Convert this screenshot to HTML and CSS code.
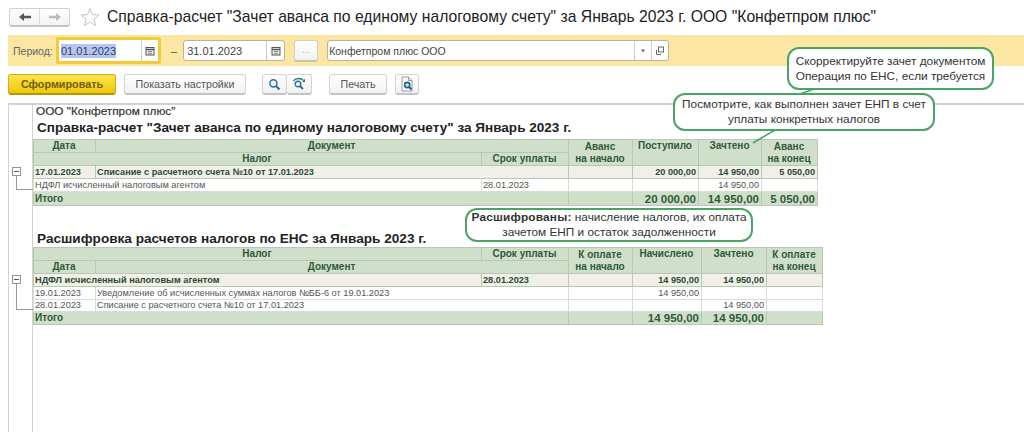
FILE: index.html
```html
<!DOCTYPE html>
<html lang="en">
<head>
    <meta charset="UTF-8">
    <meta name="viewport" content="width=device-width, initial-scale=1.0">
    <title>Справка-расчет</title>
    <link rel="stylesheet" href="styles.css">
</head>
<body>
    <div class="page">
        <div class="title-bar">
            <div class="nav-group">
                <span class="nav-btn">
                    <svg width="14" height="10" viewBox="0 0 14 10"><path d="M1 5 L6 1 V3.8 H13 V6.2 H6 V9 Z" fill="#555"/></svg>
                </span>
                <span class="nav-btn">
                    <svg width="14" height="10" viewBox="0 0 14 10"><path d="M13 5 L8 1 V3.8 H1 V6.2 H8 V9 Z" fill="#bbb"/></svg>
                </span>
            </div>
            <svg class="star" width="20" height="20" viewBox="0 0 20 20"><path d="M10 1.5 L12.4 7.6 L19 8 L13.9 12.2 L15.6 18.6 L10 15 L4.4 18.6 L6.1 12.2 L1 8 L7.6 7.6 Z" fill="#fff" stroke="#c4c4c4"/></svg>
            <h1 class="page-title">Справка-расчет "Зачет аванса по единому налоговому счету" за Январь 2023 г. ООО "Конфетпром плюс"</h1>
        </div>

        <div class="filter-bar">
            <span class="filter-label">Период:</span>
            <div class="field field-focus">
                <span class="field-text"><span class="selected">01.01.2023</span></span>
                <span class="field-btn">
                    <svg width="10" height="10" viewBox="0 0 10 10"><rect x="1" y="1.5" width="8" height="7.5" fill="#eee" stroke="#555"/><path d="M1 3.5 H9" stroke="#555" stroke-width="1.4"/><path d="M3 5.5 H7 M3 7.3 H7" stroke="#888"/></svg>
                </span>
            </div>
            <span class="dash">–</span>
            <div class="field field-date">
                <span class="field-text">31.01.2023</span>
                <span class="field-btn">
                    <svg width="10" height="10" viewBox="0 0 10 10"><rect x="1" y="1.5" width="8" height="7.5" fill="#eee" stroke="#555"/><path d="M1 3.5 H9" stroke="#555" stroke-width="1.4"/><path d="M3 5.5 H7 M3 7.3 H7" stroke="#888"/></svg>
                </span>
            </div>
            <span class="dots-btn">...</span>
            <div class="field field-org">
                <span class="field-text">Конфетпром плюс ООО</span>
                <span class="field-btn narrow">
                    <svg width="6" height="4" viewBox="0 0 6 4"><path d="M1 0.5 H5 L3 3.5 Z" fill="#666"/></svg>
                </span>
                <span class="field-btn narrow">
                    <svg width="10" height="10" viewBox="0 0 10 10"><rect x="3.5" y="1" width="5" height="5" fill="#fff" stroke="#666"/><path d="M1.5 4 V8.5 H6" fill="none" stroke="#666"/></svg>
                </span>
            </div>
        </div>

        <div class="tool-bar">
            <span class="btn btn-primary">Сформировать</span>
            <span class="btn btn-settings">Показать настройки</span>
            <div class="btn-group">
                <span class="btn btn-icon">
                    <svg width="13" height="13" viewBox="0 0 14 14"><circle cx="5.8" cy="5.8" r="3.8" fill="#f4f8fb" stroke="#2d6f9c" stroke-width="1.6"/><path d="M8.6 8.6 L12.4 12.4" stroke="#2d6f9c" stroke-width="2.2"/></svg>
                </span>
                <span class="btn btn-icon">
                    <svg width="14" height="14" viewBox="0 0 14 14"><path d="M1.5 4 C3 0.8 9 0.8 11.5 3.4" fill="none" stroke="#2a7a6a" stroke-width="1.3"/><path d="M13 1.8 V5 H10 Z" fill="#2a7a6a"/><circle cx="6" cy="7" r="2.8" fill="#f4f8fb" stroke="#2d6f9c" stroke-width="1.4"/><path d="M8 9 L11 12" stroke="#2d6f9c" stroke-width="2"/></svg>
                </span>
            </div>
            <span class="btn btn-print">Печать</span>
            <span class="btn btn-preview">
                <svg width="14" height="16" viewBox="0 0 14 16"><path d="M2 1 H8.5 L12 4.5 V15 H2 Z" fill="#fff" stroke="#999"/><path d="M8.5 1 V4.5 H12" fill="none" stroke="#999"/><circle cx="7.2" cy="9" r="2.6" fill="#cfe3f0" stroke="#1f5f8c" stroke-width="1.6"/><path d="M9 11 L11.5 13.5" stroke="#1f5f8c" stroke-width="2"/></svg>
            </span>
        </div>

        <div class="report">
            <div class="gutter">
                <span class="tree tree-one"><span class="minus"></span></span>
                <span class="tree tree-two"><span class="minus"></span></span>
            </div>
            <div class="report-body">
                <div class="org-name">ООО "Конфетпром плюс"</div>
                <h2 class="report-title">Справка-расчет "Зачет аванса по единому налоговому счету" за Январь 2023 г.</h2>
                <table class="grid grid-one">
                    <colgroup>
                        <col class="c-date"><col class="c-doc"><col class="c-term"><col class="c-start"><col class="c-a"><col class="c-b"><col class="c-end">
                    </colgroup>
                    <tr class="head">
                        <td>Дата</td>
                        <td colspan="2">Документ</td>
                        <td rowspan="2">Аванс<br>на начало</td>
                        <td rowspan="2" class="top">Поступило</td>
                        <td rowspan="2" class="top">Зачтено</td>
                        <td rowspan="2">Аванс<br>на конец</td>
                    </tr>
                    <tr class="head">
                        <td colspan="2">Налог</td>
                        <td>Срок уплаты</td>
                    </tr>
                    <tr class="group">
                        <td>17.01.2023</td>
                        <td colspan="2">Списание с расчетного счета №10 от 17.01.2023</td>
                        <td></td>
                        <td class="num">20 000,00</td>
                        <td class="num">14 950,00</td>
                        <td class="num">5 050,00</td>
                    </tr>
                    <tr class="line">
                        <td colspan="2">НДФЛ исчисленный налоговым агентом</td>
                        <td>28.01.2023</td>
                        <td></td>
                        <td></td>
                        <td class="num">14 950,00</td>
                        <td></td>
                    </tr>
                    <tr class="total">
                        <td colspan="3">Итого</td>
                        <td></td>
                        <td class="num">20 000,00</td>
                        <td class="num">14 950,00</td>
                        <td class="num">5 050,00</td>
                    </tr>
                </table>

                <h2 class="report-title second">Расшифровка расчетов налогов по ЕНС за Январь 2023 г.</h2>
                <table class="grid grid-two">
                    <colgroup>
                        <col class="c-date"><col class="c-doc"><col class="c-term"><col class="c-start"><col class="c-c"><col class="c-d"><col class="c-end">
                    </colgroup>
                    <tr class="head">
                        <td colspan="2">Налог</td>
                        <td>Срок уплаты</td>
                        <td rowspan="2">К оплате<br>на начало</td>
                        <td rowspan="2" class="top">Начислено</td>
                        <td rowspan="2" class="top">Зачтено</td>
                        <td rowspan="2">К оплате<br>на конец</td>
                    </tr>
                    <tr class="head">
                        <td>Дата</td>
                        <td colspan="2">Документ</td>
                    </tr>
                    <tr class="group">
                        <td colspan="2">НДФЛ исчисленный налоговым агентом</td>
                        <td>28.01.2023</td>
                        <td></td>
                        <td class="num">14 950,00</td>
                        <td class="num">14 950,00</td>
                        <td></td>
                    </tr>
                    <tr class="line">
                        <td>19.01.2023</td>
                        <td colspan="2">Уведомление об исчисленных суммах налогов №ББ-6 от 19.01.2023</td>
                        <td></td>
                        <td class="num">14 950,00</td>
                        <td></td>
                        <td></td>
                    </tr>
                    <tr class="line">
                        <td>28.01.2023</td>
                        <td colspan="2">Списание с расчетного счета №10 от 17.01.2023</td>
                        <td></td>
                        <td></td>
                        <td class="num">14 950,00</td>
                        <td></td>
                    </tr>
                    <tr class="total">
                        <td colspan="3">Итого</td>
                        <td></td>
                        <td class="num">14 950,00</td>
                        <td class="num">14 950,00</td>
                        <td></td>
                    </tr>
                </table>
            </div>
        </div>

        <!-- Callouts sit over the form -->
        <svg class="tail tail-one" width="24" height="10" viewBox="0 0 24 10"><path d="M22 1 L2 8" stroke="#4aa564" stroke-width="1.6"/></svg>
        <svg class="tail tail-two" width="26" height="16" viewBox="0 0 26 16"><path d="M24 1 L2 14" stroke="#4aa564" stroke-width="1.6"/></svg>
        <div class="callout callout-one"><span>Скорректируйте зачет документом<br>Операция по ЕНС, если требуется</span></div>
        <div class="callout callout-two"><span>Посмотрите, как выполнен зачет ЕНП в счет<br>уплаты конкретных налогов</span></div>
        <div class="callout callout-three"><span><b>Расшифрованы:</b> начисление налогов, их оплата<br>зачетом ЕНП и остаток задолженности</span></div>
    </div>
</body>
</html>
```

FILE: styles.css
```css
* {
    margin: 0;
    padding: 0;
    box-sizing: border-box;
}

body {
    font-family: "Liberation Sans", Arial, sans-serif;
    background: #fff;
    color: #333;
}

.page {
    position: relative;
    width: 1024px;
    height: 432px;
    overflow: hidden;
}

/* title */
.title-bar {
    display: flex;
    align-items: center;
    height: 35px;
    padding: 0 0 1px 9px;
}

.nav-group {
    display: flex;
    width: 61px;
    height: 19px;
    border: 1px solid #d0d0d0;
    border-bottom: 2px solid #c4c4c4;
    border-radius: 3px;
    background: linear-gradient(#fff, #f3f3f3);
}

.nav-btn {
    flex: 1;
    display: flex;
    align-items: center;
    justify-content: center;
}

.nav-btn + .nav-btn {
    border-left: 1px solid #ddd;
}

.star {
    margin-left: 10px;
}

.page-title {
    margin-left: 7px;
    font-size: 15.7px;
    font-weight: normal;
    color: #222;
    white-space: nowrap;
}

/* period bar */
.filter-bar {
    display: flex;
    align-items: center;
    height: 31px;
    margin-left: 8px;
    padding-left: 5px;
    background: #fbe6a2;
}

.filter-label {
    width: 43px;
    font-size: 10.5px;
    color: #666;
}

.field {
    display: flex;
    height: 21px;
    background: #fff;
    border: 1px solid #b9b39a;
    border-radius: 3px;
    font-size: 10.5px;
    color: #444;
}

.field-focus {
    box-sizing: content-box;
    width: 99px;
    border: 3px solid #f5c93c;
    border-radius: 2px;
}

.field-focus .field-btn {
    width: 17px;
}

.field-date {
    width: 102px;
    margin-left: 6px;
}

.field-org {
    width: 342px;
    margin-left: 9px;
}

.field-text {
    flex: 1;
    display: flex;
    align-items: center;
    padding-left: 1px;
    white-space: nowrap;
    overflow: hidden;
}

.field-date .field-text {
    padding-left: 3px;
    font-size: 11px;
}

.field-focus .field-text {
    padding-left: 2px;
    font-size: 11px;
}

.selected {
    background: #b7c6ea;
    color: #2a3f78;
    padding: 1px 0;
}

.field-btn {
    display: flex;
    align-items: center;
    justify-content: center;
    width: 18px;
    border-left: 1px solid #ccc;
}

.field-btn.narrow {
    width: 17px;
}

.dash {
    margin-left: 10px;
    font-size: 11px;
    color: #555;
}

.dots-btn {
    display: flex;
    align-items: center;
    justify-content: center;
    width: 24px;
    height: 22px;
    margin-left: 9px;
    border: 1px solid #d5d0bd;
    border-bottom: 2px solid #c9c4ae;
    border-radius: 3px;
    background: linear-gradient(#fff, #f1f1f1);
    font-size: 9px;
    color: #aaa;
}

/* buttons */
.tool-bar {
    display: flex;
    align-items: center;
    height: 21px;
    margin-top: 8px;
    margin-left: 8px;
}

.btn {
    display: flex;
    align-items: center;
    justify-content: center;
    height: 21px;
    border: 1px solid #d4d4d4;
    border-bottom: 2px solid #c4c4c4;
    border-radius: 3px;
    background: linear-gradient(#fff, #f1f1f1);
    font-size: 10.7px;
    color: #555;
}

.btn-primary {
    width: 108px;
    border-color: #d2ae12;
    border-bottom-color: #b8960a;
    background: linear-gradient(#fde44c, #eec80a);
    font-weight: bold;
    font-size: 10.8px;
    color: #6f5e10;
}

.btn-settings {
    width: 122px;
    margin-left: 8px;
}

.btn-group {
    display: flex;
    margin-left: 16px;
}

.btn-icon {
    width: 25px;
}

.btn-icon + .btn-icon {
    border-left: 0;
}

.btn-print {
    width: 58px;
    margin-left: 17px;
}

.btn-preview {
    width: 24px;
    margin-left: 8px;
}

/* report */
.report {
    display: flex;
    height: 329px;
    margin-top: 8px;
    margin-left: 8px;
    border-top: 2px solid #d2d2d2;
}

.gutter {
    position: relative;
    width: 25px;
    border-left: 1px solid #d2d2d2;
    border-right: 1px solid #d2d2d2;
}

.tree {
    position: absolute;
    left: 7px;
    width: 17px;
    border-left: 1px solid #999;
    border-bottom: 1px solid #999;
}

.tree-one {
    top: 65px;
    height: 20px;
}

.tree-two {
    top: 173px;
    height: 32px;
}

.minus {
    position: absolute;
    top: -3px;
    left: -5px;
    width: 9px;
    height: 9px;
    border: 1px solid #8a9a8a;
    background: #fff;
}

.minus::after {
    content: "";
    position: absolute;
    top: 3px;
    left: 1px;
    width: 5px;
    height: 1px;
    background: #555;
}

.org-name {
    height: 15px;
    margin: 0 0 0 3px;
    font-size: 11.8px;
    line-height: 13px;
    color: #333;
    -webkit-text-stroke: 0.2px #333;
    white-space: nowrap;
}

.report-title {
    height: 17px;
    margin-left: 4px;
    font-size: 13.55px;
    line-height: 16px;
    font-weight: bold;
    color: #222;
    white-space: nowrap;
}

.report-title.second {
    height: 17px;
    margin-top: 24px;
    line-height: 18px;
    font-size: 13.6px;
}

.grid {
    table-layout: fixed;
    border-collapse: collapse;
    font-size: 9.2px;
}

.grid-one {
    width: 784px;
    margin-top: 2px;
}

.grid-two {
    width: 789px;
}

.c-date { width: 62px; }
.c-doc { width: 386px; }
.c-term { width: 87px; }
.c-start { width: 64px; }
.c-a { width: 66px; }
.c-b { width: 63px; }
.c-c { width: 69px; }
.c-d { width: 65px; }
.c-end { width: 56px; }

.grid td {
    height: 13px;
    padding: 0 2px 0 1px;
    border: 1px solid #b8c8b4;
    white-space: nowrap;
    overflow: hidden;
    line-height: 12px;
}

.head td {
    background: #d0dfc9;
    text-align: center;
    font-size: 10px;
    font-weight: bold;
    color: #2f5a3c;
    line-height: 12px;
}

.head td.top {
    vertical-align: top;
}

.group td {
    background: #f0f0e8;
    font-weight: bold;
    color: #2c4a34;
}

.line td {
    border-color: #d5e0d5;
    color: #555;
}

.grid-two .line + .line td {
    height: 12px;
    line-height: 11px;
}

.total td {
    height: 14px;
    background: #d0dfc9;
    font-size: 10px;
    font-weight: bold;
    color: #2f5a3c;
}

.grid-two .total td {
    height: 13px;
}

.total td.num {
    font-size: 11.5px;
}

.grid td.num {
    text-align: right;
}

/* callouts */
.callout {
    position: absolute;
    display: flex;
    align-items: center;
    justify-content: center;
    text-align: center;
    background: #fff;
    border: 2px solid #4aa564;
    border-radius: 12px;
    font-size: 11.8px;
    line-height: 15px;
    color: #333;
    white-space: nowrap;
}

.callout b {
    letter-spacing: 0.2px;
}

.callout-one {
    top: 47px;
    left: 787px;
    width: 207px;
    height: 43px;
}

.callout-two {
    top: 93px;
    left: 673px;
    width: 262px;
    height: 38px;
}

.callout-three {
    top: 208px;
    left: 465px;
    width: 288px;
    height: 34px;
}

.tail {
    position: absolute;
}

.tail-one {
    top: 87px;
    left: 795px;
}

.tail-two {
    top: 129px;
    left: 751px;
}
```
